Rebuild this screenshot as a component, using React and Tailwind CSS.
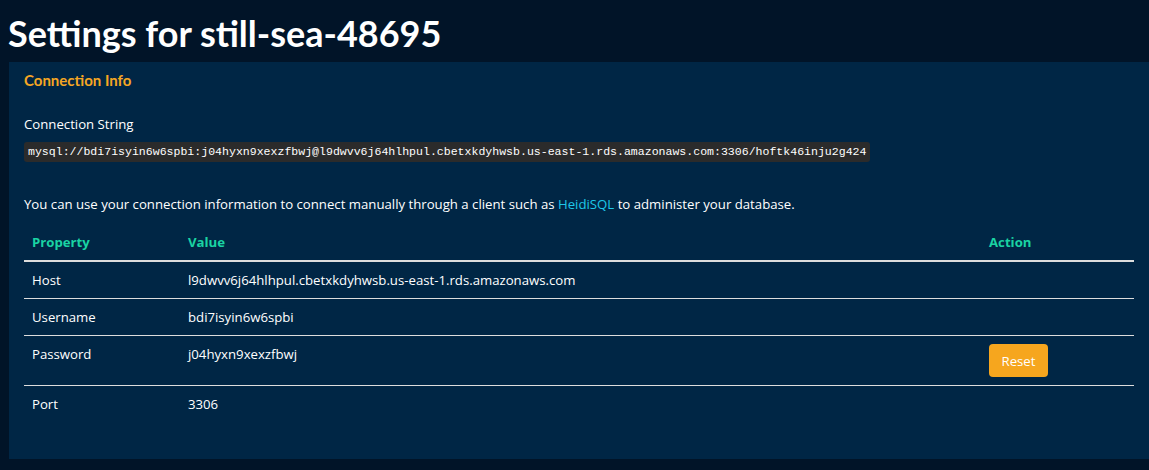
export default function App() {
  const rows = [
    { prop: 'Host', value: 'l9dwvv6j64hlhpul.cbetxkdyhwsb.us-east-1.rds.amazonaws.com' },
    { prop: 'Username', value: 'bdi7isyin6w6spbi' },
    { prop: 'Password', value: 'j04hyxn9xexzfbwj', reset: true },
    { prop: 'Port', value: '3306' },
  ]

  return (
    <div className="min-h-screen bg-[#011428] text-white font-['Open_Sans',sans-serif] text-[13.2px]">
      <div className="pl-[8px] pt-[11px] h-[62px]">
        <h1 className="font-['Lato',sans-serif] font-bold text-[36px] leading-[44px]">Settings for still-sea-48695</h1>
      </div>

      <div className="ml-[9px] bg-[#002645] px-[15px] pt-[8px] pb-[37px]">
        <h2 className="font-['Lato',sans-serif] font-bold text-[15px] leading-[20px] text-[#f5a623]">Connection Info</h2>

        <div className="mt-[24px] leading-[20px]">Connection String</div>
        <div className="mt-[7px]">
          <code className="inline-block bg-[#2b2b2b] rounded-[3px] px-[4px] py-[1px] font-['Liberation_Mono',monospace] text-[11.55px] leading-[18px]">
            mysql://bdi7isyin6w6spbi:j04hyxn9xexzfbwj@l9dwvv6j64hlhpul.cbetxkdyhwsb.us-east-1.rds.amazonaws.com:3306/hoftk46inju2g424
          </code>
        </div>

        <p className="mt-[32px] leading-[20px]">
          You can use your connection information to connect manually through a client such as{' '}
          <a className="text-[#1ec8e8]">HeidiSQL</a> to administer your database.
        </p>

        <table className="w-full mt-[10px] border-collapse">
          <thead>
            <tr className="border-b-2 border-[#dddddd] text-left text-[#1ad3a3] font-bold">
              <th className="w-[156px] px-[8px] py-[8px] leading-[20px]">Property</th>
              <th className="px-[8px] py-[8px] leading-[20px]">Value</th>
              <th className="w-[153px] px-[8px] py-[8px] leading-[20px]">Action</th>
            </tr>
          </thead>
          <tbody>
            {rows.map((r, i) => (
              <tr key={r.prop} className={i < rows.length - 1 ? 'border-b border-[#dddddd]' : ''}>
                <td className="px-[8px] py-[8px] leading-[20px] align-top">{r.prop}</td>
                <td className="px-[8px] py-[8px] leading-[20px] align-top">{r.value}</td>
                <td className="px-[8px] py-[8px] leading-[20px] align-top">
                  {r.reset && (
                    <button className="bg-[#f6a61e] text-white rounded-[4px] w-[59px] h-[33px] leading-[20px]">Reset</button>
                  )}
                </td>
              </tr>
            ))}
          </tbody>
        </table>
      </div>
    </div>
  )
}
